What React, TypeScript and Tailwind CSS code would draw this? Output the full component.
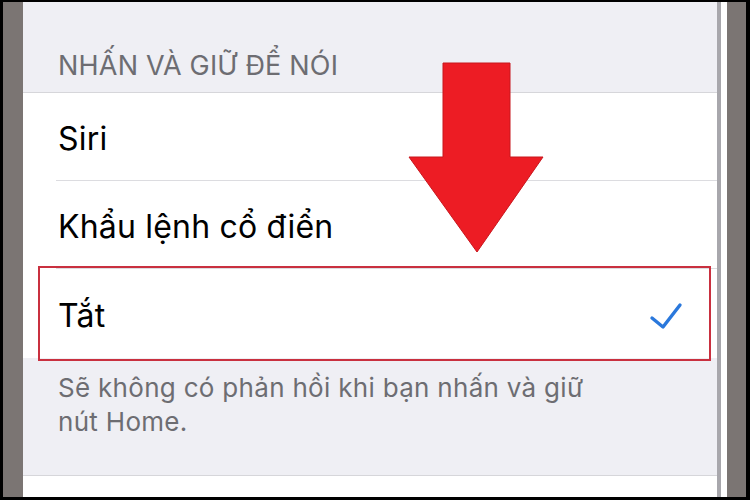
import React from "react";

const FONT = "font-['Inter','Noto_Sans',sans-serif]";

function Check() {
  return (
    <svg width="34" height="28" viewBox="0 0 34 28" fill="none">
      <polyline
        points="3,16 14,25 31,3"
        stroke="#2a78dc"
        strokeWidth="3.4"
        strokeLinecap="round"
        strokeLinejoin="round"
      />
    </svg>
  );
}

function Row({ label }: { label: string }) {
  return (
    <div className="bg-white pl-[33px]">
      <div className="flex h-[88px] items-center border-b border-[#dcdce0] pl-[2px] pt-[5px]">
        <span className="text-[32px] leading-none tracking-[0.2px] text-black">{label}</span>
      </div>
    </div>
  );
}

export default function App() {
  return (
    <div className={`relative flex h-[500px] w-[750px] bg-black pt-[2px] pb-[3px] pl-[3px] pr-[4px] ${FONT}`}>
      <div className="w-[20px] bg-[#7b7573]" />

      <div className="flex flex-1 flex-col bg-[#efeff4]">
        <div className="flex h-[91px] items-end border-b border-[#d6d6da] pb-[13px] pl-[35px]">
          <span className="text-[27px] leading-none tracking-[0.2px] text-[#6d6d72]">
            NHẤN VÀ GIỮ ĐỂ NÓI
          </span>
        </div>
        <Row label="Siri" />
        <Row label="Khẩu lệnh cổ điển" />
        <div className="bg-white pl-[35px] pr-[34px]">
          <div className="flex h-[89px] items-center justify-between pt-[5px]">
            <span className="text-[32px] leading-none tracking-[0.2px] text-black">Tắt</span>
            <Check />
          </div>
        </div>
        <div className="h-[118px] border-b border-[#d6d6da] pl-[35px] pt-[13px]">
          <p className="max-w-[570px] text-[26px] leading-[34px] tracking-[0.3px] text-[#6d6d72]">
            Sẽ không có phản hồi khi bạn nhấn và giữ nút Home.
          </p>
        </div>
        <div className="flex-1 bg-white" />
      </div>

      <div className="w-[4px] bg-[#a8a7ac]" />
      <div className="w-[6px] bg-white" />
      <div className="w-[19px] bg-[#7b7573]" />

      <div className="absolute left-[38px] top-[266px] h-[95px] w-[673px] border-2 border-[#c9303f]" />

      <svg
        className="absolute left-0 top-0"
        width="750"
        height="500"
        viewBox="0 0 750 500"
      >
        <polygon
          points="443,63 510,63 510,157 543,157 477,252 409,157 443,157"
          fill="#ed1c24"
          stroke="#c8161d"
          strokeWidth="1"
        />
      </svg>
    </div>
  );
}
